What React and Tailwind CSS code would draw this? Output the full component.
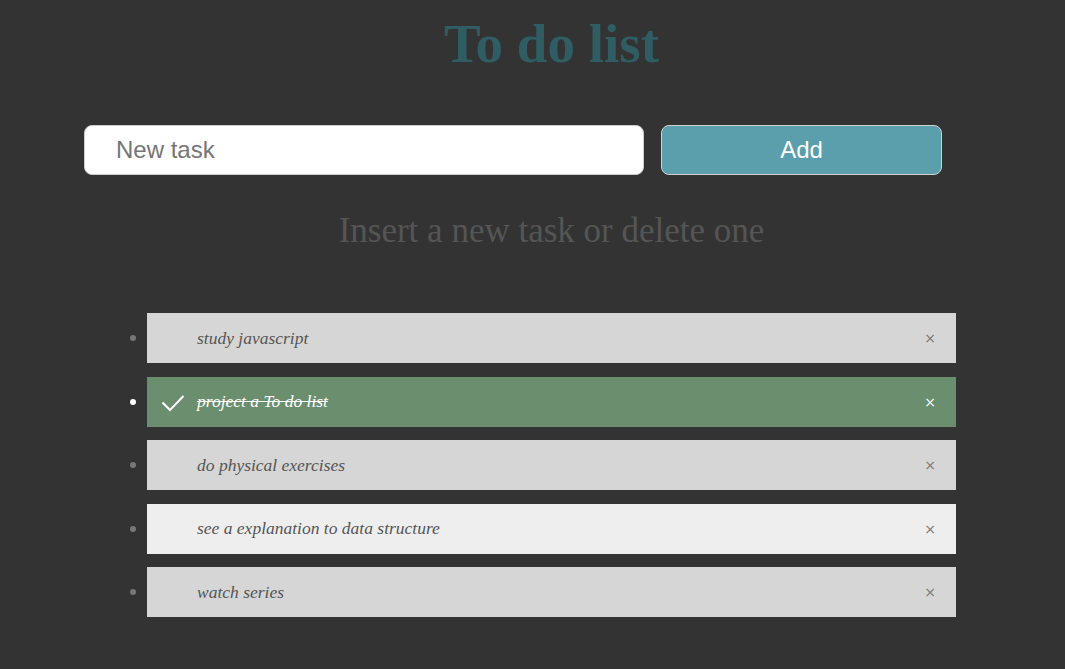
export default function App() {
  const tasks = [
    { text: "study javascript", bg: "bg-[#d6d6d6]", done: false },
    { text: "project a To do list", bg: "bg-[#6b8e6f]", done: true },
    { text: "do physical exercises", bg: "bg-[#d6d6d6]", done: false },
    { text: "see a explanation to data structure", bg: "bg-[#eeeeee]", done: false },
    { text: "watch series", bg: "bg-[#d6d6d6]", done: false },
  ];

  return (
    <div className="min-h-[669px] w-full bg-[#333333] overflow-hidden">
      <div className="ml-[147px] w-[809px] pt-[11px]">
        <h1 className="text-center text-[55px] leading-[66px] font-bold text-[#2f5d63] font-['Liberation_Serif',serif]">
          To do list
        </h1>
      </div>

      <div className="ml-[84px] mt-[48px] flex gap-[17px]">
        <input
          type="text"
          placeholder="New task"
          className="w-[560px] h-[50px] rounded-[8px] border border-[#cccccc] bg-white pl-[31px] text-[24px] text-[#333] placeholder:text-[#757575] font-['Liberation_Sans',sans-serif] outline-none"
        />
        <button className="w-[281px] h-[50px] rounded-[8px] border border-[#d0d0d0] bg-[#5a9fab] text-white text-[24px] font-['Liberation_Sans',sans-serif]">
          Add
        </button>
      </div>

      <div className="ml-[147px] w-[809px] mt-[34px]">
        <p className="text-center text-[35px] leading-[44px] text-[#555555] font-['Liberation_Serif',serif]">
          Insert a new task or delete one
        </p>
      </div>

      <ul className="ml-[130px] mt-[60px] flex flex-col gap-[13.5px]">
        {tasks.map((t) => (
          <li key={t.text} className="flex items-center">
            <span
              className={
                "w-[6px] h-[6px] rounded-full mr-[11px] " +
                (t.done ? "bg-white" : "bg-[#777777]")
              }
            />
            <div
              className={
                "relative w-[809px] h-[50px] flex items-center pl-[50px] " + t.bg
              }
            >
              {t.done && (
                <svg
                  className="absolute left-[14px] top-[17px]"
                  width="24"
                  height="18"
                  viewBox="0 0 24 18"
                  fill="none"
                >
                  <polyline
                    points="1.5,8.5 9,16 22.5,2"
                    stroke="white"
                    strokeWidth="2"
                  />
                </svg>
              )}
              <span
                className={
                  "italic text-[17.5px] font-['Liberation_Serif',serif] " +
                  (t.done ? "text-white line-through" : "text-[#555555]")
                }
              >
                {t.text}
              </span>
              <span
                className={
                  "absolute right-[20px] top-1/2 -translate-y-1/2 text-[14px] font-['DejaVu_Sans',sans-serif] " +
                  (t.done ? "text-white" : "text-[#777777]")
                }
              >
                ×
              </span>
            </div>
          </li>
        ))}
      </ul>
    </div>
  );
}
